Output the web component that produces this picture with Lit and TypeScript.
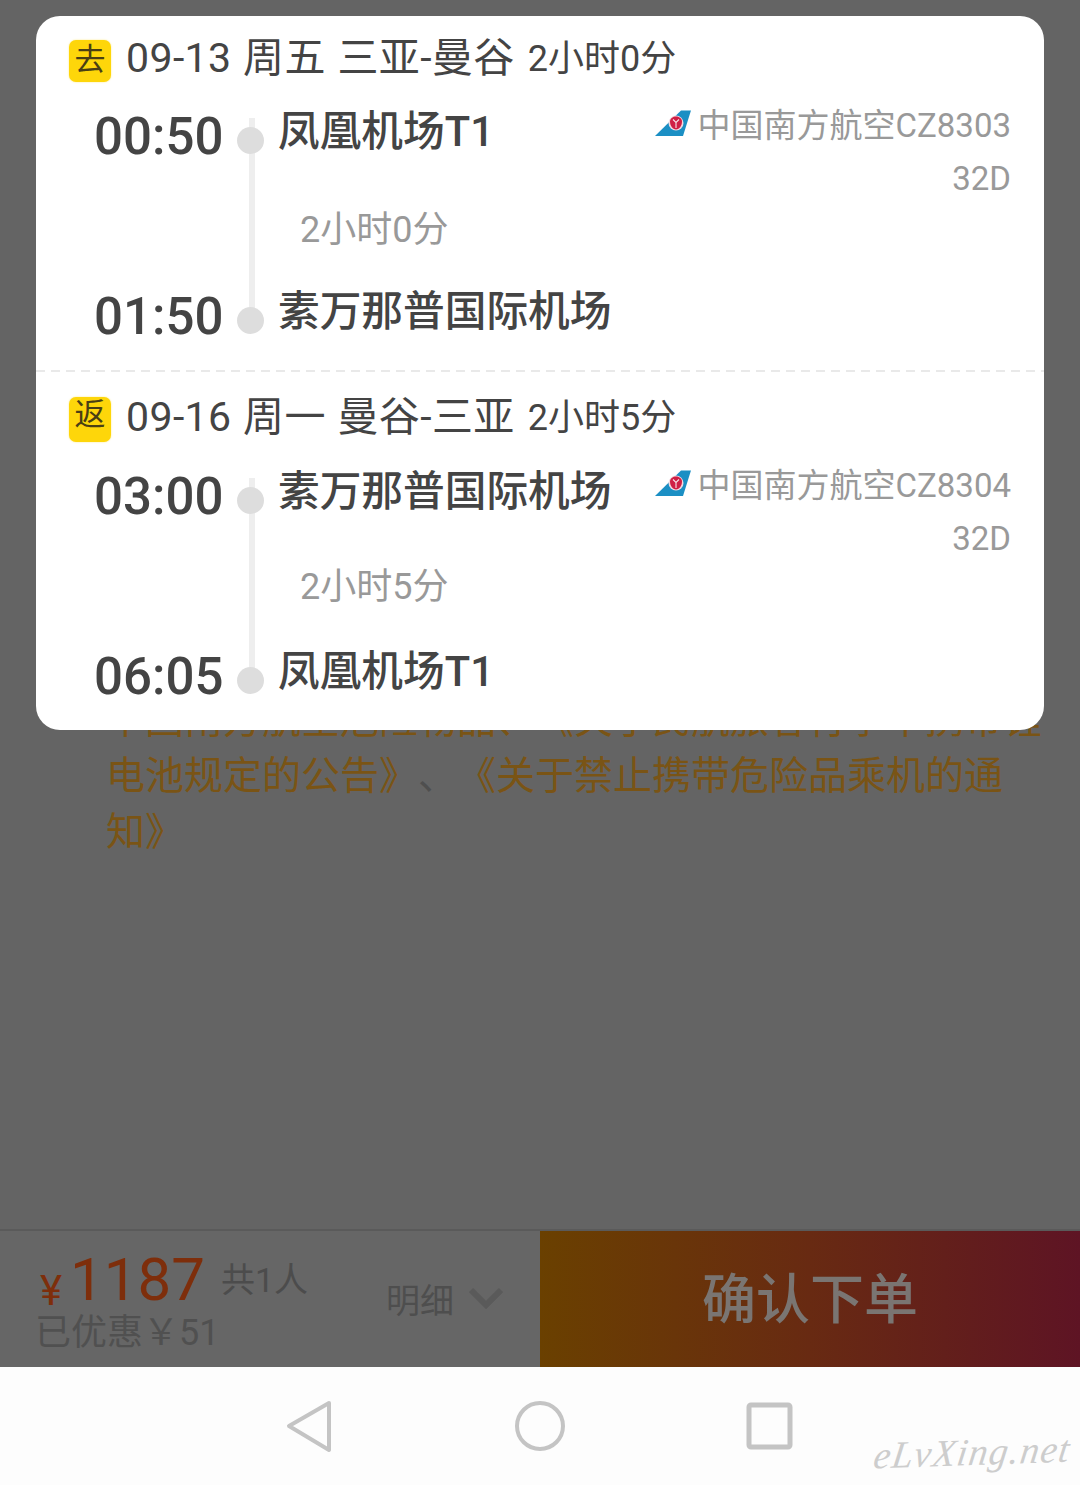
import { LitElement, html, css, svg } from "lit";
import { customElement } from "lit/decorators.js";

const tail = svg`<svg class="tail" viewBox="0 0 36 26" width="36" height="26">
  <path d="M0 26 L26 0.5 L36 0.5 L28 26 Z" fill="#1b8fc4"/>
  <circle cx="21" cy="13" r="7.5" fill="#f3d9e0"/>
  <path d="M21 6.5 C24 6.5 27 8.5 27 11.5 C27 15.5 24.5 19.5 21 19.5 C17.5 19.5 15 15.5 15 11.5 C15 8.5 18 6.5 21 6.5 Z" fill="#cf1f45"/>
  <path d="M18 9.5 L21 12.5 L24 9.5 M21 12.5 V18" stroke="#f6e3e8" stroke-width="1.1" fill="none"/>
</svg>`;

interface Seg {
  tag: string; head: string; dur: string; dep: string; arr: string;
  from: string; to: string; flight: string; cls: string;
}

const SEGS: Seg[] = [
  { tag: "去", head: "09-13 周五 三亚-曼谷", dur: "2小时0分", dep: "00:50", arr: "01:50", from: "凤凰机场T1", to: "素万那普国际机场", flight: "中国南方航空CZ8303", cls: "first" },
  { tag: "返", head: "09-16 周一 曼谷-三亚", dur: "2小时5分", dep: "03:00", arr: "06:05", from: "素万那普国际机场", to: "凤凰机场T1", flight: "中国南方航空CZ8304", cls: "second" },
];

@customElement("app-root")
export class AppRoot extends LitElement {
  static styles = css`
    :host { display: block; width: 1080px; height: 1485px; position: relative; overflow: hidden; background: #646464; font-family: Roboto, "Noto Sans CJK SC", sans-serif; text-spacing-trim: space-all; }
    .page { display: flex; flex-direction: column; height: 1485px; }
    .content { flex: 1; padding: 692px 0 0 106px; font-size: 39px; line-height: 56px; color: #7a5415; white-space: nowrap; }
    .content .sep { color: #4f4f4f; }
    .bar { height: 138px; box-sizing: border-box; border-top: 2px solid #5a5a5a; display: flex; background: #666; }
    .price { width: 540px; box-sizing: border-box; padding-left: 36px; display: flex; }
    .pcol { width: 350px; display: flex; flex-direction: column; }
    .pline { display: flex; align-items: baseline; box-sizing: border-box; height: 80px; padding: 15px 0 0 4px; color: #7e2e0b; }
    .yen { font-size: 42px; margin-right: 8px; position: relative; top: 5px; }
    .amount { font-size: 60px; line-height: 68px; }
    .people { font-size: 34px; color: #4c4c4c; margin-left: 16px; position: relative; top: -8px; }
    .saved { font-size: 36px; color: #505050; line-height: 44px; margin-left: -1px; }
    .detail { display: flex; align-items: center; gap: 15px; font-size: 34px; color: #4e4e4e; height: 134px; }
    .confirm { flex: 1; display: flex; align-items: center; justify-content: center; font-size: 54px; font-weight: 500; color: #7a7572; background: linear-gradient(90deg, #6a4000 0%, #682a12 50%, #5e1424 100%); padding: 0 0 8px; box-sizing: border-box; }
    .nav { height: 118px; background: #fdfdfd; display: flex; position: relative; }
    .nav svg.icons { display: block; }
    .mark { position: absolute; left: 874px; top: 63px; font-family: "Liberation Serif", serif; font-style: italic; font-size: 38px; line-height: 44px; color: #cdcdcd; letter-spacing: 1.3px; white-space: nowrap; transform: rotate(-2deg) skewX(-10deg); }

    .modal { position: absolute; left: 36px; top: 16px; width: 1008px; height: 714px; background: #fff; border-radius: 24px; color: #444; }
    .seg { box-sizing: border-box; }
    .seg.first { height: 354px; padding-top: 24px; }
    .divider { height: 2px; background: repeating-linear-gradient(90deg, #e9e9e9 0 9px, transparent 9px 15px); }
    .seg.second { height: 358px; padding-top: 25px; }
    .head { display: flex; align-items: center; padding-left: 33px; white-space: nowrap; color: #444; }
    .first .head { height: 42px; }
    .second .head { height: 45px; }
    .tag { width: 42px; height: 100%; border-radius: 7px; background: #fed60a; box-shadow: 0 0 2px #ffe97a; display: flex; align-items: center; justify-content: center; font-size: 31px; color: #4a3f14; margin-right: 15px; padding-bottom: 10px; box-sizing: border-box; }
    .second .tag { padding-bottom: 16px; }
    .route { font-size: 41px; letter-spacing: 0.4px; position: relative; top: -7px; word-spacing: 1px; }
    .hdur { font-size: 36px; margin-left: 13px; position: relative; top: -6px; }
    .grid { display: grid; grid-template-columns: 143px 27px 1fr auto; grid-template-rows: 60px 120px 60px; padding: 0 33px 0 58px; margin-top: 23px; }
    .time { font-size: 51px; font-weight: 500; line-height: 60px; padding-top: 2px; color: #444; }
    .rail { grid-column: 2; grid-row: 1 / 4; position: relative; display: flex; flex-direction: column; justify-content: space-between; padding: 22px 0 11px; }
    .rail::before { content: ""; position: absolute; left: 12px; top: 13px; width: 6px; height: 202px; background: #eeeeee; }
    .dot { width: 27px; height: 27px; border-radius: 50%; background: #dddddd; position: relative; }
    .name { font-size: 41.7px; font-weight: 500; line-height: 52px; padding: 1px 0 0 14px; color: #444; white-space: nowrap; }
    .dur { grid-column: 3; grid-row: 2; font-size: 36px; line-height: 44px; color: #999; padding: 43px 0 0 36px; }
    .second .dur { padding-top: 40px; }
    .air { grid-column: 4; grid-row: 1; display: flex; align-items: center; font-size: 33px; color: #999; height: 36px; white-space: nowrap; }
    .tail { margin-right: 7px; }
    .seat { grid-column: 4; grid-row: 1 / 3; text-align: right; font-size: 33px; color: #999; line-height: 40px; padding-top: 54px; }
    .t1 { grid-column: 1; grid-row: 1; }
    .n1 { grid-column: 3; grid-row: 1; }
    .t2 { grid-column: 1; grid-row: 3; }
    .n2 { grid-column: 3; grid-row: 3; }
  `;

  seg(s: Seg) {
    return html`<section class="seg ${s.cls}">
      <div class="head">
        <span class="tag">${s.tag}</span>
        <span class="route">${s.head}</span>
        <span class="hdur">${s.dur}</span>
      </div>
      <div class="grid">
        <div class="time t1">${s.dep}</div>
        <div class="rail"><span class="dot"></span><span class="dot"></span></div>
        <div class="name n1">${s.from}</div>
        <div class="air">${tail}${s.flight}</div>
        <div class="seat">32D</div>
        <div class="dur">${s.dur}</div>
        <div class="time t2">${s.arr}</div>
        <div class="name n2">${s.to}</div>
      </div>
    </section>`;
  }

  render() {
    return html`
      <div class="page">
        <div class="content">
          中国南方航空危险物品、《关于民航旅客行李中携带锂<br />
          电池规定的公告》<span class="sep">、</span>《关于禁止携带危险品乘机的通<br />
          知》
        </div>
        <div class="bar">
          <div class="price">
            <div class="pcol">
              <div class="pline"><span class="yen">¥</span><span class="amount">1187</span><span class="people">共1人</span></div>
              <div class="saved">已优惠￥51</div>
            </div>
            <div class="detail">明细
              <svg width="34" height="22" viewBox="0 0 34 22"><path d="M2 3 L17 18 L32 3" fill="none" stroke="#5a5a5a" stroke-width="6"/></svg>
            </div>
          </div>
          <div class="confirm">确认下单</div>
        </div>
        <div class="nav">
          <svg class="icons" width="800" height="118" viewBox="0 1367 800 118">
            <path d="M329 1403 L289 1426 L329 1450 Z" fill="none" stroke="#c4c4c4" stroke-width="4" stroke-linejoin="round"/>
            <circle cx="540" cy="1426" r="23" fill="none" stroke="#c4c4c4" stroke-width="4"/>
            <rect x="749" y="1405" width="41" height="42" rx="2" fill="none" stroke="#c4c4c4" stroke-width="5"/>
          </svg>
          <div class="mark">eLvXing.net</div>
        </div>
      </div>
      <div class="modal">
        ${this.seg(SEGS[0])}
        <div class="divider"></div>
        ${this.seg(SEGS[1])}
      </div>
    `;
  }
}
